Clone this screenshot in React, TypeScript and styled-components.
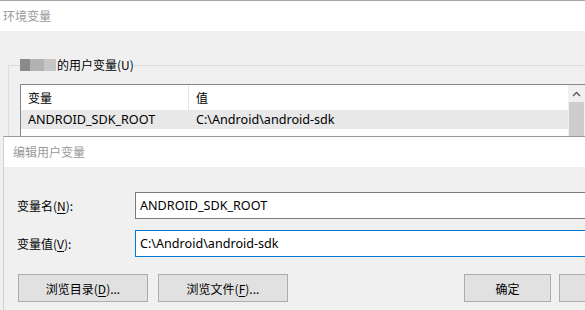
import React from 'react';
import styled, { createGlobalStyle } from 'styled-components';

const GlobalStyle = createGlobalStyle`
  html, body {
    margin: 0;
    padding: 0;
    background: #f0f0f0;
  }
  body {
    font-family: "Noto Sans", "Noto Sans CJK SC", sans-serif;
    font-size: 12px;
    color: #000;
  }
`;

const Desktop = styled.div`
  position: relative;
  width: 585px;
  height: 310px;
  overflow: hidden;
  background: #f0f0f0;
`;

const Window = styled.div`
  width: 660px;
  height: 310px;
  border-top: 1px solid #a6a6a6;
  background: #f0f0f0;
  box-sizing: border-box;
`;

const TitleBar = styled.div<{ $indent: number }>`
  height: 30px;
  display: flex;
  align-items: center;
  padding-left: ${(p) => p.$indent}px;
  padding-bottom: 2px;
  box-sizing: border-box;
  background: #ffffff;
  color: #999999;
  font-size: 12px;
  font-family: "Noto Sans CJK SC", sans-serif;
`;

const GroupBox = styled.fieldset`
  margin: 26px 0 0 8px;
  padding: 0 0 0 11px;
  border: 1px solid #dcdcdc;
  border-right: none;
  border-bottom: none;
  min-inline-size: 0;
`;

const GroupLegend = styled.legend`
  padding: 0;
  height: 16px;
  line-height: 16px;
  display: flex;
  align-items: center;
  font-family: "Noto Sans CJK SC", sans-serif;
`;

const Blur = styled.span<{ $w: number; $c: string }>`
  display: inline-block;
  width: ${(p) => p.$w}px;
  height: 12px;
  background: ${(p) => p.$c};
`;

const ListView = styled.div`
  position: relative;
  margin-top: 11px;
  width: 620px;
  height: 120px;
  border: 1px solid #828790;
  background: #fff;
`;

const ListRow = styled.div<{ $head?: boolean; $sel?: boolean }>`
  display: grid;
  grid-template-columns: 168px 1fr;
  height: ${(p) => (p.$head ? 25 : 19)}px;
  background: ${(p) => (p.$sel ? '#e8e8e8' : '#ffffff')};
  align-items: center;
  font-family: ${(p) => (p.$head ? '"Noto Sans CJK SC", sans-serif' : '"Noto Sans", "Noto Sans CJK SC", sans-serif')};
  font-size: ${(p) => (p.$head ? 12 : 12.6)}px;
`;

const Cell = styled.div<{ $sep?: boolean }>`
  height: 100%;
  display: flex;
  align-items: center;
  padding-left: 7px;
  border-right: ${(p) => (p.$sep ? '1px solid #e5e5e5' : 'none')};
`;

const ScrollBar = styled.div`
  position: absolute;
  top: 0;
  left: 547px;
  width: 17px;
  height: 100%;
  display: flex;
  flex-direction: column;
  background: #f0f0f0;
`;

const ScrollArrow = styled.div`
  height: 17px;
  display: flex;
  align-items: center;
  justify-content: center;
  background: #f0f0f0;
`;

const ScrollThumb = styled.div`
  flex: 1;
  margin: 0 1px;
  background: #cdcdcd;
`;

const Dialog = styled.div`
  position: absolute;
  left: 3px;
  top: 136px;
  width: 656px;
  height: 200px;
  border: 1px solid #9a9a9a;
  border-left-color: #d0d0d0;
  background: #f0f0f0;
`;

const DialogBody = styled.div`
  padding: 25px 14px 0 14px;
  display: flex;
  flex-direction: column;
`;

const FieldRow = styled.div`
  display: flex;
  align-items: center;
  margin-bottom: 11px;
`;

const FieldLabel = styled.label`
  width: 118px;
  margin-left: -1px;
  font-family: "Noto Sans CJK SC", sans-serif;
  u { text-decoration: underline; text-underline-offset: 2px; }
`;

const TextBox = styled.div<{ $focus?: boolean }>`
  flex: 1;
  height: 27px;
  box-sizing: border-box;
  border: 1px solid ${(p) => (p.$focus ? '#0078d7' : '#7a7a7a')};
  background: #fff;
  display: flex;
  align-items: center;
  padding-left: 4px;
  font-family: "Noto Sans", sans-serif;
  font-size: 12.6px;
`;

const ButtonRow = styled.div`
  display: flex;
  justify-content: space-between;
  margin-top: 6px;
`;

const ButtonGroup = styled.div<{ $gap: number }>`
  display: flex;
  gap: ${(p) => p.$gap}px;
`;

const Button = styled.div<{ $w: number }>`
  width: ${(p) => p.$w}px;
  height: 28px;
  box-sizing: border-box;
  border: 1px solid #adadad;
  background: #e1e1e1;
  display: flex;
  align-items: center;
  justify-content: center;
  font-family: "Noto Sans CJK SC", sans-serif;
  u { text-decoration: underline; text-underline-offset: 2px; }
`;

export default function App() {
  return (
    <Desktop>
      <GlobalStyle />
      <Window>
        <TitleBar $indent={3}>环境变量</TitleBar>
        <GroupBox>
          <GroupLegend>
            <Blur $w={10} $c="#8a8a8a" />
            <Blur $w={14} $c="#b2b2b2" />
            <Blur $w={12} $c="#c6c6c6" />
            <span style={{ marginLeft: 1 }}>的用户变量(U)</span>
          </GroupLegend>
          <ListView>
            <ListRow $head>
              <Cell $sep>变量</Cell>
              <Cell>值</Cell>
            </ListRow>
            <ListRow $sel>
              <Cell>ANDROID_SDK_ROOT</Cell>
              <Cell>C:\Android\android-sdk</Cell>
            </ListRow>
            <ListRow>
              <Cell />
              <Cell />
            </ListRow>
            <ScrollBar>
              <ScrollArrow>
                <svg width="9" height="6" viewBox="0 0 9 6">
                  <path d="M1 5 L4.5 1.5 L8 5" fill="none" stroke="#606060" strokeWidth="1.5" />
                </svg>
              </ScrollArrow>
              <ScrollThumb />
            </ScrollBar>
          </ListView>
        </GroupBox>
      </Window>

      <Dialog>
        <TitleBar $indent={9}>编辑用户变量</TitleBar>
        <DialogBody>
          <FieldRow>
            <FieldLabel>变量名(<u>N</u>):</FieldLabel>
            <TextBox>ANDROID_SDK_ROOT</TextBox>
          </FieldRow>
          <FieldRow>
            <FieldLabel>变量值(<u>V</u>):</FieldLabel>
            <TextBox $focus>C:\Android\android-sdk</TextBox>
          </FieldRow>
          <ButtonRow>
            <ButtonGroup $gap={10}>
              <Button $w={130}>浏览目录(<u>D</u>)...</Button>
              <Button $w={130}>浏览文件(<u>F</u>)...</Button>
            </ButtonGroup>
            <ButtonGroup $gap={8}>
              <Button $w={87}>确定</Button>
              <Button $w={87}>取消</Button>
            </ButtonGroup>
          </ButtonRow>
        </DialogBody>
      </Dialog>
    </Desktop>
  );
}
